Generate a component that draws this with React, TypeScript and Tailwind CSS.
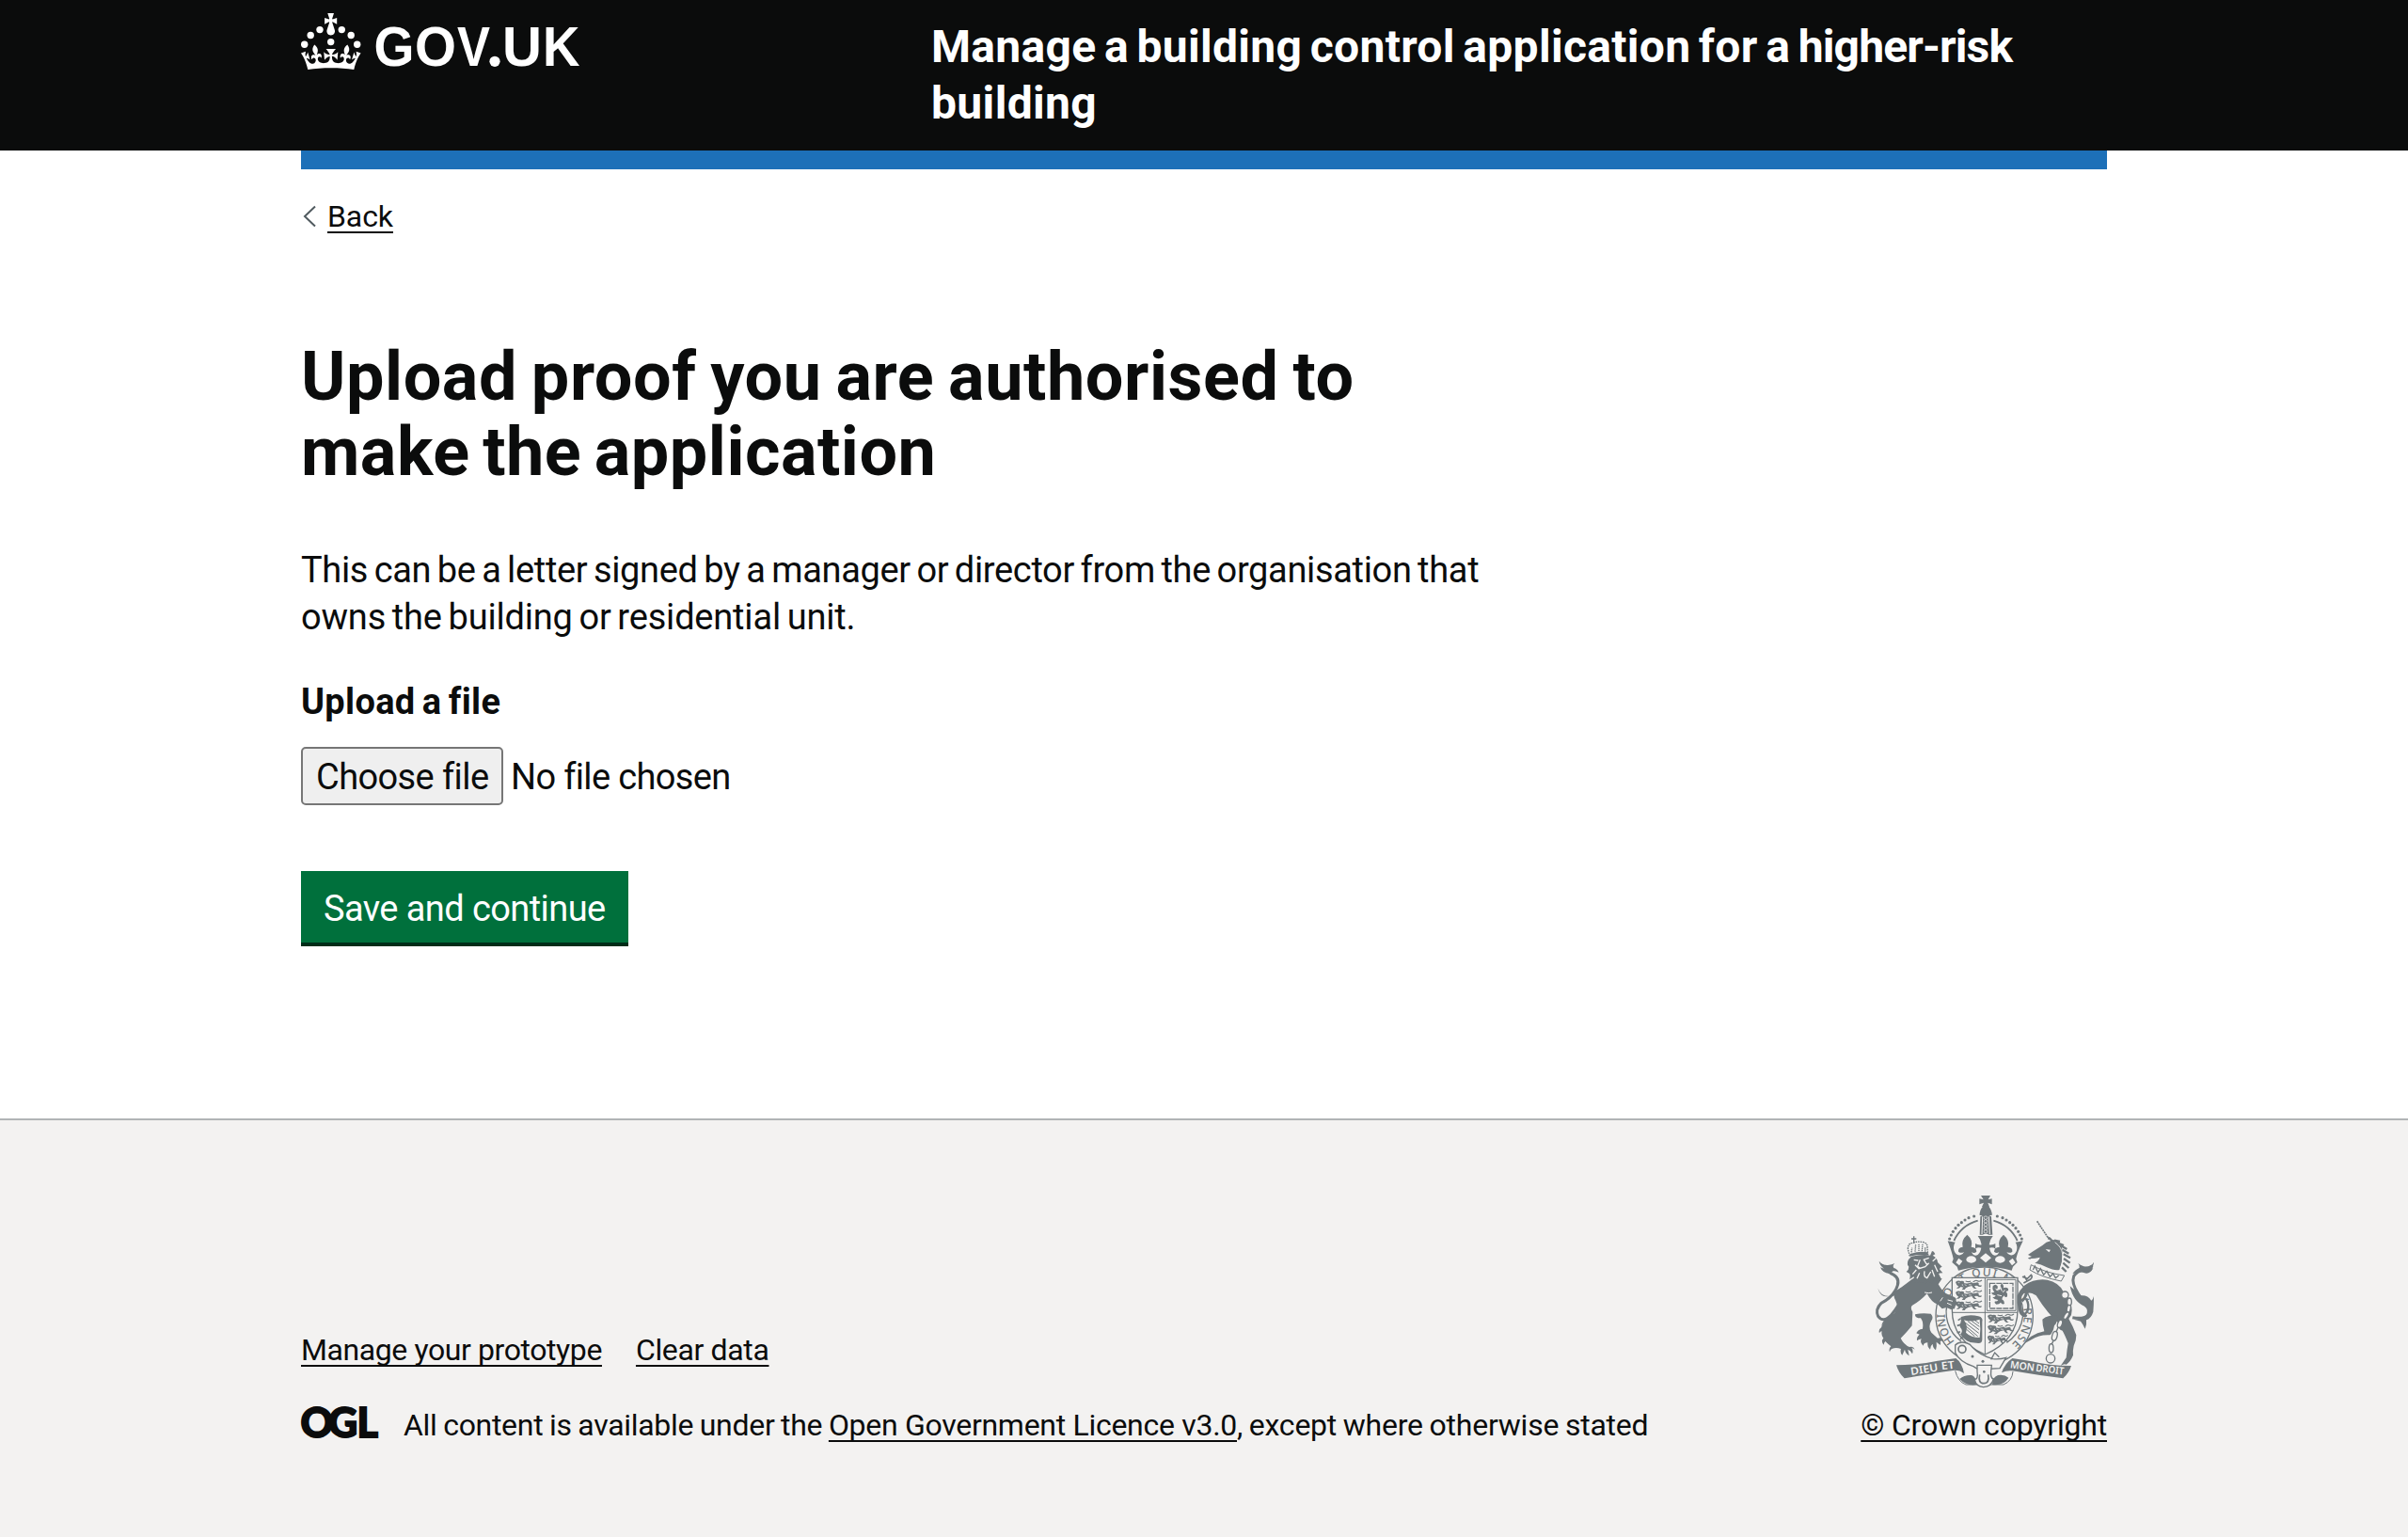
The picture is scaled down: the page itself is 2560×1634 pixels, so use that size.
import type { ReactNode } from 'react';

const INK = '#6f777b';
const PAPER = '#f3f2f1';

function GovLogo() {
  return (
    <svg width="300" height="64" viewBox="0 0 300 64" fill="#fff" className="overflow-visible" role="img" aria-label="GOV.UK">
      <circle cx="20" cy="17.6" r="3.7" />
      <circle cx="10.2" cy="23.5" r="3.7" />
      <circle cx="3.7" cy="33.2" r="3.7" />
      <circle cx="31.7" cy="30.6" r="3.7" />
      <circle cx="43.3" cy="17.6" r="3.7" />
      <circle cx="53.2" cy="23.5" r="3.7" />
      <circle cx="59.7" cy="33.2" r="3.7" />
      <path d="M33.1,9.8c.2-.1.3-.3.5-.5l4.6,2.4v-6.8l-4.6,1.5c-.1-.2-.3-.3-.5-.5l1.9-5.9h-6.7l1.9,5.9c-.2.1-.3.3-.5.5l-4.6-1.5v6.8l4.6-2.4c.1.2.3.3.5.5l-2.6,8c-.9,2.8,1.2,5.7,4.1,5.7h0c3,0,5.1-2.9,4.1-5.7l-2.6-8ZM37,37.9s-3.4,3.8-4.1,6.1c2.2,0,4.2-.5,6.4-2.8l-.7,8.5c-2-2.8-4.4-4.1-5.7-3.8.1,3.1.5,6.7,5.8,7.2,3.7.3,6.7-1.5,7-3.8.4-2.6-2-4.3-3.7-1.6-1.4-4.5,2.4-6.1,4.9-3.2-1.9-4.5-1.8-7.7,2.4-10.9,3,4,2.6,7.3-1.2,11.1,2.4-1.3,6.2,0,4,4.6-1.2-2.8-3.7-2.2-4.2.2-.3,1.7.7,3.7,3,4.2,1.9.3,4.7-.9,7-5.9-1.3,0-2.4.7-3.9,1.7l2.4-8c.6,2.3,1.4,3.7,2.2,4.5.6-1.6.5-2.8,0-5.3l5,1.8c-2.6,3.6-5.2,8.7-7.3,17.5-7.4-1.1-15.7-1.7-24.5-1.7h0c-8.8,0-17.1.6-24.5,1.7-2.1-8.9-4.7-13.9-7.3-17.5l5-1.8c-.5,2.5-.6,3.7,0,5.3.8-.8,1.6-2.3,2.2-4.5l2.4,8c-1.5-1-2.6-1.7-3.9-1.7,2.3,5,5.2,6.2,7,5.9,2.3-.4,3.3-2.4,3-4.2-.5-2.4-3-3.1-4.2-.2-2.2-4.6,1.6-6,4-4.6-3.7-3.7-4.2-7.1-1.2-11.1,4.2,3.2,4.3,6.4,2.4,10.9,2.5-2.8,6.3-1.3,4.9,3.2-1.8-2.7-4.1-1-3.7,1.6.3,2.3,3.3,4.1,7,3.8,5.4-.5,5.7-4.2,5.8-7.2-1.3-.2-3.7,1-5.7,3.8l-.7-8.5c2.2,2.3,4.2,2.7,6.4,2.8-.7-2.3-4.1-6.1-4.1-6.1h10.6,0Z" />
      <g fontFamily="'Liberation Sans', Arial, sans-serif" fontWeight="700" fontSize="59">
        <text x="77.5" y="56" textLength="43" lengthAdjust="spacingAndGlyphs">G</text>
        <text x="121" y="56" textLength="44" lengthAdjust="spacingAndGlyphs">O</text>
        <text x="166" y="56" textLength="35" lengthAdjust="spacingAndGlyphs">V</text>
        <text x="214" y="56" textLength="42" lengthAdjust="spacingAndGlyphs">U</text>
        <text x="257" y="56" textLength="39.5" lengthAdjust="spacingAndGlyphs">K</text>
      </g>
      <circle cx="206" cy="51.3" r="5.6" />
    </svg>
  );
}

function OglLogo() {
  return (
    <svg width="82" height="34" viewBox="0 0 82 34" className="shrink-0 overflow-visible" role="img" aria-label="OGL">
      <text
        x="-0.5 29 59.5"
        y="33"
        fontFamily="Lato, sans-serif"
        fontWeight="900"
        fontSize="43"
        fill="#0b0c0c"
        stroke="#0b0c0c"
        strokeWidth="1.8"
      >
        OGL
      </text>
    </svg>
  );
}

/* One passant lion of the quartered shield, drawn in a 90 × 32 cell. */
function Passant({ x, y }: { x: number; y: number }) {
  return (
    <g transform={`translate(${x} ${y})`} fill={INK}>
      <path d="M2 6q8-7 16-3q8-2 12 3q-3 8-9 9q10 5 8 9q-6-1-10-3q-4 6-14 6q2-5 7-7q-8-4-10-14Z" />
      <path d="M24 8q14 4 22 1q8-5 12 1l14-3q6 2 4 8q5 3 10 1l-2 4q-8 2-12-2q-6-2-10 1q3 6 8 8h-8q-7-4-8-9q-14 2-19 7l-4 5h-9q4-6 8-8q-6-4-6-14Z" />
      <path d="M58 6q8-8 14-4t14-2M34 3q10 4 16 0" fill="none" stroke={INK} strokeWidth="3.4" />
      <path d="M10 8h5M31 14l6 3M44 14l9 1" fill="none" stroke={PAPER} strokeWidth="2" />
    </g>
  );
}

function RoyalArms() {
  const dots: [number, number][] = [
    [368, 201], [373, 189], [379, 178], [387, 167], [396, 157], [406, 149], [417, 141], [429, 134], [446, 129],
  ];
  return (
    <svg width="234" height="206" viewBox="129 60 702 618" fill={INK} className="overflow-visible" role="img" aria-label="Royal arms">
      {/* crown: cross, orb and arches */}
      <path d="M468 63h30l-7 13l12-3v18l-13-5l5 13h-24l6-13l-14 5V73l13 3Z" />
      <path d="M473 99h21q10 13 9 27h-39q-1-15 9-27Z" />
      <path d="M466 130q17-12 35 0l4 58h-12q-9-6-20 0h-9Z" />
      <path d="M473 130l-2 56M493 130l3 56" stroke={PAPER} strokeWidth="3" fill="none" />
      {[134, 145, 156, 167, 178].map((y) => (
        <circle key={y} cx="483" cy={y} r="5.4" stroke={PAPER} strokeWidth="2" />
      ))}
      {dots.map(([x, y]) => (
        <g key={x}>
          <circle cx={x} cy={y} r="4.7" />
          <circle cx={966 - x} cy={y} r="4.7" />
        </g>
      ))}
      <path d="M458 143Q405 158 382 207M508 143Q561 158 584 207" fill="none" stroke={INK} strokeWidth="5.5" />
      {/* crown: rim */}
      <path d="M362 208l24 4q-7 10-4 26q5 17 20 15q9-2 12-11q-9 7-18 0q-2-13 14-15q-6-22 14-39q20 17 13 39q17 2 17 15q-8 7-16 1q4 11 14 11q13-3 17-24q-12-3-19 3v-17q7 5 20 4q-2-16-12-28h48q-10 12-12 28q13 1 20-4v17q-7-6-19-3q4 21 17 24q10 0 14-11q-8 6-16-1q0-13 17-15q-7-22 13-39q20 17 14 39q16 2 14 15q-9 7-18 0q3 9 12 11q15 2 20-15q3-16-4-26l24-4q-17 34-22 57l4 11l-14 14l-4 12q-84-24-170 0l-4-12l-16-14l4-11q-5-23-18-57Z" />
      <g fill={PAPER}>
        <ellipse cx="437" cy="267" rx="16" ry="11" />
        <ellipse cx="529" cy="267" rx="16" ry="11" />
        <path d="M483 247l18 15l-18 15l-18-15ZM388 277l9-14l12 9l-10 14ZM578 277l-9-14l-12 9l10 14Z" />
      </g>
      {/* garter */}
      <circle cx="479" cy="446" r="155" fill={PAPER} stroke={INK} strokeWidth="4" />
      <path d="M365 394a114 114 0 0 0 40 134M594 394a114 114 0 0 1-44 138" fill="none" stroke={INK} strokeWidth="4" />
      <path id="garter" d="M394 539a126 126 0 1 1 170 0a126 126 0 0 1-170 0" fill="none" />
      <g fontFamily="'Noto Sans', sans-serif" fontSize="36" fontWeight="500">
        <text><textPath href="#garter" startOffset="14">HONI</textPath></text>
        <text><textPath href="#garter" startOffset="142">SO</textPath></text>
        <text><textPath href="#garter" startOffset="226" letterSpacing="4">T QUI M</textPath></text>
        <text><textPath href="#garter" startOffset="438" letterSpacing="4">Y PENSE</textPath></text>
      </g>
      {/* shield */}
      <path d="M376 325h209v103q0 96-104 142Q376 524 376 428Z" fill={PAPER} stroke={INK} strokeWidth="4" />
      <path d="M481 325v245M376 436h209M487 331v99h92M487 331h92v99" fill="none" stroke={INK} strokeWidth="3" />
      <Passant x={385} y={333} />
      <Passant x={385} y={366} />
      <Passant x={385} y={399} />
      <Passant x={487} y={441} />
      <Passant x={487} y={475} />
      <g transform="translate(487 508) scale(0.78 1)">
        <Passant x={0} y={0} />
      </g>
      <path d="M496 343h74v80h-74Z" fill="none" stroke={INK} strokeWidth="4" strokeDasharray="18 3" />
      <path d="M506 352q8-10 15 0q2 10-6 12q12 2 16-4q-4-12 4-16q8 6 4 14q10-4 16 2q2 10-8 8q8 8 4 18q-8 4-8-4q-8 4-8 12q8 4 8 14q-8 4-12-4q-4 6-14 6q-8-4-4-10q6 2 10-4q-12 0-18-8q8 0 10-6q-12-2-14-10q6 2 10-2q-8-6-5-18Z" />
      <path d="M514 359l8 8M529 352l6 16M538 372l6-8M520 380l14 3" stroke={PAPER} strokeWidth="3" fill="none" />
      {/* harp */}
      <path d="M404 450q28-9 56-2q16 4 12 18v56q0 12-12 12l-26-3q-22-8-32-26q8-6 4-16q-6-6-6-14q6-8 4-25Z" />
      <path d="M414 460q20 8 50-2q4 32 0 58q-28 0-44-16q8-18-6-40Z" fill={PAPER} />
      <path d="M417 468l44 34M418 478l40 34M422 490l26 22M426 464l36 27M438 463l25 18M450 462l12 9" fill="none" stroke={INK} strokeWidth="3" />
      <path d="M404 455l-9 6M402 475l-10 3M402 497l-10 4M410 514l-8 7" stroke={INK} strokeWidth="5" />
      {/* lion */}
      <g>
        <path d="M205 412Q194 430 180 446q-24 24-40 2q-10-22 10-42q30-14 46-42q18-34-6-48q-22-10-30-30" fill="none" stroke={INK} strokeWidth="9" strokeLinejoin="round" />
        <path d="M143 272q12 14 28 13q14-2 22-6q-8 8-3 15q10 2 16 14q-10-6-18-4l-12 8q-22-2-29-20l12 4q-14-10-16-24ZM139 358q6 22 20 26q32 4 56-12q-6 0-10-2q6-6 8-14q-18 12-38 28q-28 0-36-26ZM151 480q2-22 24-28l10-10l20 2q-18 22-44 22q-6 6-10 14Z" />
        <path d="M290 342q20-20 54-14l-12 18q8 16 22 28l28 12q10 6 6 10l4 12l-6 8l-2 8l-12 2l-14-6l-14 4l-12-12q-22-8-36-36q-22 24-48 38q-6 8 2 20l-2 44q-16 20-26 30l-10 10q10 20 28 28q12-4 17 8l-10-6q6 10 2 20q-6-12-14-14l4 20q-12-8-14-20l-8 18q-8-8-4-20q-12-4-22-2q-12 2-14 12q-4-10 4-18q-10-8-18-16q-6 6-4 12q-12-12-2-22q-8-10-5-22q-6 0-8 6q-4-12 6-18q4-14 14-24q16-12 28-22q14-18 4-40q-12-16 4-32q50-36 86-66Z" />
        <path d="M258 442q22-6 50-2q10 10 2 22q-12 20 0 38l20 18q16-6 20 12q-8-6-12-2q4 8 0 12l-12-10q2 14-2 26q-10-8-10-20q-8 6-8 18q-10-8-8-22q-12 0-14 10q-12-10-6-22q-8 2-14 6q-2-12 8-20l-10-4q4-12 20-14q4-20-6-34q-20 0-18-14Z" />
        <path d="M288 372q14 4 24 0M346 388l-8 12M362 396l16 4M360 406l14 6" fill="none" stroke={PAPER} strokeWidth="3" />
        {/* lion head and crown */}
        <path d="M244 258q42-10 62-4l6-14q6 0 10 10l-8 4q16 8 16 22l14 14q-8 2-8 8l10 12q-14 0-12 4l8 16q-18-4-22 0l-10 14q-10-12-18 0l-20-6l-16 4q2-12-2-20l-14 8q4-12 0-18l-10-6q8-6 8-16l-4-6q-2-16 10-24Z" />
        <path d="M254 268l14 2M284 268l18-6M274 268l-8 20l8 8M286 268l10 16M258 284l12 12l20-6l12-12M272 310l-8 18M288 304q-4 18 8 22l12-20M320 284l10 22M312 300l8 22M262 300l-12 14M326 262l-12 10" fill="none" stroke={PAPER} strokeWidth="4" />
        <path d="M241 256l-6-22q0-18 14-20q18-6 36-2q14 4 12 18l2 22" fill="none" stroke={INK} strokeWidth="4" strokeDasharray="5 2.5" />
        <path d="M241 250q28-12 58-6v9q-30-4-58 4Z" />
        <path d="M254 193v22M246 201h16" stroke={INK} strokeWidth="4" />
        <path d="M246 244l2-14m10 12l2-24m10 22v-22m10 22l2-22m8 24v-14" stroke={INK} strokeWidth="4" strokeDasharray="4 2" />
      </g>
      {/* unicorn */}
      <g>
        <path d="M647 145l40 60" fill="none" stroke={INK} strokeWidth="5" strokeDasharray="6 2" />
        <path d="M632 242l32-20q12-12 26-14l-10-14q10 0 16 10q14 0 24 12q10 14 8 36q0 24-10 48q-14 4-40-8q-18-10-38-14q14-8 16-18q-16 4-28 4q-6 4-10-2l12-4l-12-6Z" />
        <path d="M674 234l16 2l-5 8Z" fill={PAPER} />
        <path d="M702 206l18 4M712 214l20 8M722 222l20 12M728 236l20 12M731 250l22 12M732 264l20 14M730 278l18 16M726 292l14 14" stroke={INK} strokeWidth="7" />
        <path d="M704 212q22 16 24 38q2 28-6 46" fill="none" stroke={PAPER} strokeWidth="2.5" />
        <path d="M628 284q46 26 106 34l-10 18q-62-12-100-36Z" fill={PAPER} stroke={INK} strokeWidth="3" />
        <path d="M634 300l6-12l10 20l8-12l10 20l10-12l10 18l10-10l8 14l10-8" fill="none" stroke={INK} strokeWidth="4" />
        <path d="M600 322l16 6l12-12q6 6-2 14l-22 12M606 318l10 20" fill="none" stroke={INK} strokeWidth="5" />
        <path d="M606 350q34-24 74-18q36 8 50 36q22 20 26 44q4 18 0 32l-8 12q14 24 24 52q0 20-8 34q-4 18-2 30q-8 20-22 30q-6-4-18 4l18-26q2-24 6-46q-10-26-18-40q-16-4-12-24q-34-28-72-88q-20-14-40-6q-8 8-8 20l4 36q12 6 16 14q-4 8-12 4q-14-6-16-20q-6-26-4-48Q590 366 606 350Z" />
        <path d="M598 400q12-10 16-28q16-14 38-8" fill="none" stroke={INK} strokeWidth="9" />
        <path d="M612 392q12 20 4 40l-12 14" fill="none" stroke={INK} strokeWidth="7" />
        <path d="M664 458q16-14 46-14q6 20-8 34q-4 22-14 30q-34-2-58 14l-22 12q6-14 20-22q20-12 42-16q-6-20-6-38Z" />
        <path d="M760 452q34 6 48-6q16-14 6-28q-20-14-36-42q-22-34-14-56q16-24 44-16q10-4 14-18" fill="none" stroke={INK} strokeWidth="9" />
        <path d="M828 275q-8 16-32 14q-12-4-18-10q6 8 4 14q-16 8-22 20q24-10 36-4q18 8 30-14l-12 2q14-8 14-22ZM752 352q22 18 36 30q20-2 32 16q6-4 8-14q0 28-2 50q-6 20-22 26q2 14-4 28q-6-14-14-24l-22-6q26 0 38-12q12-18-4-30q-36-14-46-64Z" />
        {/* chain */}
        <g fill={PAPER} stroke={INK} strokeWidth="4">
          <ellipse cx="736" cy="380" rx="11" ry="11" />
          <ellipse cx="750" cy="402" rx="7" ry="12" />
          <ellipse cx="748" cy="424" rx="6" ry="12" transform="rotate(10 748 424)" />
          <ellipse cx="740" cy="446" rx="6" ry="13" transform="rotate(30 740 446)" />
          <ellipse cx="720" cy="472" rx="7" ry="13" transform="rotate(20 720 472)" />
          <ellipse cx="703" cy="511" rx="8" ry="15" transform="rotate(15 703 511)" />
          <ellipse cx="692" cy="550" rx="7" ry="14" />
          <circle cx="690" cy="583" r="14" />
          <path d="M714 484l-6 14M699 526l-6 12" />
        </g>
      </g>
      {/* garter buckle */}
      <path d="M386 540q14-14 38-6q10 2 16 12q24 26 66 38q22 2 42-4l-20 34l-68 4l-16-10q-44-14-58-44Z" fill={PAPER} stroke={INK} strokeWidth="4" />
      <circle cx="408" cy="553" r="12" fill={PAPER} stroke={INK} strokeWidth="5" />
      <circle cx="441" cy="576" r="4.5" />
      <circle cx="474" cy="592" r="4.5" />
      <path d="M500 586l12-22l14 14" fill="none" stroke={INK} strokeWidth="4" />
      {/* scroll */}
      <path d="M386 622q8 34 34 44h120q28-12 30-42" fill={PAPER} stroke={INK} strokeWidth="3" />
      <path d="M400 648q16-14 38-12q14 4 18 30q-34 6-56-18ZM556 644q-14-12-34-8q-18 6-18 30q38 4 52-22Z" />
      <path d="M198 604q70 0 132-14l58-8q20 14 26 48q-12-10-30-10q-74 10-160 26q-18-16-26-42Z" />
      <path d="M756 606q-72 0-126-14l-62-10q-24 16-34 46q16-8 34-6q80 14 162 24q18-16 26-40Z" />
      <path d="M456 604v20q4 24-8 26q4 22 28 24q26-2 32-26q-10-2-8-24l2-20Z" fill={PAPER} stroke={INK} strokeWidth="4" />
      <path d="M464 634q-6 28 13 28t14-28" fill="none" stroke={INK} strokeWidth="5" />
      <circle cx="478" cy="625" r="4" />
      <g fill={PAPER} fontFamily="'Noto Sans', sans-serif" fontWeight="600">
        <text x="245" y="636" fontSize="34" textLength="88" lengthAdjust="spacingAndGlyphs" transform="rotate(-9 245 636)">DIEU</text>
        <text x="343" y="619" fontSize="34" textLength="42" lengthAdjust="spacingAndGlyphs" transform="rotate(-7 343 619)">ET</text>
        <text x="560" y="613" fontSize="32" textLength="78" lengthAdjust="spacingAndGlyphs" transform="rotate(7 560 613)">MON</text>
        <text x="642" y="623" fontSize="32" textLength="90" lengthAdjust="spacingAndGlyphs" transform="rotate(7 642 623)">DROIT</text>
      </g>
    </svg>
  );
}

function Link({ className = '', children }: { className?: string; children: ReactNode }) {
  return (
    <a
      href="#"
      className={`underline decoration-2 underline-offset-[5px] [text-decoration-skip-ink:none] ${className}`}
    >
      {children}
    </a>
  );
}

export default function App() {
  return (
    <div className="flex min-h-screen flex-col bg-white font-['Roboto',sans-serif] whitespace-nowrap text-[#0b0c0c] [font-variant-ligatures:none]">
      <header className="bg-[#0b0c0c] text-white">
        <div className="mx-auto flex h-40 w-[1920px]">
          <div className="w-[670px] pt-3.5">
            <GovLogo />
          </div>
          <div className="pt-5 text-5xl leading-[60px] font-bold">
            <div className="tracking-[0.3px] [word-spacing:-3.7px]">
              Manage a building control application for a <span className="tracking-[-0.85px]">higher-risk</span>
            </div>
            <div className="tracking-[0.35px]">building</div>
          </div>
        </div>
      </header>
      <div className="mx-auto h-5 w-[1920px] bg-[#1d70b8]" />

      <main className="mx-auto w-[1920px]">
        <div className="flex h-[100px] items-center text-[32px] leading-10 tracking-[-0.08px]">
          <svg width="28" height="24" viewBox="0 0 28 24" fill="none" stroke="#505a5f" strokeWidth="2">
            <path d="M15 1.5L4 12l11 10.5" />
          </svg>
          <Link>Back</Link>
        </div>

        <h1 className="mt-[81px] text-7xl leading-20 font-bold">
          <div className="tracking-[0.55px] [word-spacing:-3.6px]">Upload proof you are authorised to</div>
          <div className="tracking-[0.5px] [word-spacing:-4.8px]">make the application</div>
        </h1>

        <div className="mt-[60px] text-[38px] leading-[50px]">
          <div className="tracking-[-0.34px] [word-spacing:-2.5px]">
            This can be a letter signed by a manager or director from the organisation that
          </div>
          <div className="tracking-[-0.19px] [word-spacing:-2.5px]">owns the building or residential unit.</div>
        </div>

        <div className="mt-10 text-[38px] leading-[50px] font-bold tracking-[0.3px] [word-spacing:-2.4px]">
          Upload a file
        </div>
        <div className="mt-[23px] flex items-center gap-2 text-[38px] leading-[50px]">
          <button className="h-[62px] w-[215px] rounded-[5px] border-2 border-[#767676] bg-[#efefef] pt-0.5 pl-[14px] text-left leading-[56px] tracking-[-0.6px]">
            Choose file
          </button>
          <span className="pt-0.5 tracking-[-0.66px]">No file chosen</span>
        </div>

        <button className="mt-[70px] block h-20 w-[348px] border-b-4 border-[#002d18] bg-[#00703c] pt-[3px] pl-6 text-left text-[38px] leading-[72px] tracking-[-0.585px] text-white">
          Save and continue
        </button>
      </main>

      <footer className="mt-[183px] flex-1 border-t-2 border-[#b1b4b6] bg-[#f3f2f1] text-[32px] leading-10">
        <div className="mx-auto flex w-[1920px] items-end justify-between pt-[79px]">
          <div>
            <div className="mb-10 flex gap-9">
              <Link className="tracking-[-0.41px]">Manage your prototype</Link>
              <Link className="tracking-[-0.36px]">Clear data</Link>
            </div>
            <div className="flex gap-[27px]">
              <OglLogo />
              <p className="tracking-[-0.3px] [word-spacing:-1px]">
                All content is available under the{' '}
                <Link className="tracking-[-0.29px] [word-spacing:0px]">Open Government Licence v3.0</Link>
                <span className="tracking-[-0.23px]">, except where otherwise stated</span>
              </p>
            </div>
          </div>
          <div className="flex flex-col items-end">
            <div className="mr-[13px] mb-[19px]">
              <RoyalArms />
            </div>
            <Link className="tracking-[-0.19px]">© Crown copyright</Link>
          </div>
        </div>
      </footer>
    </div>
  );
}
